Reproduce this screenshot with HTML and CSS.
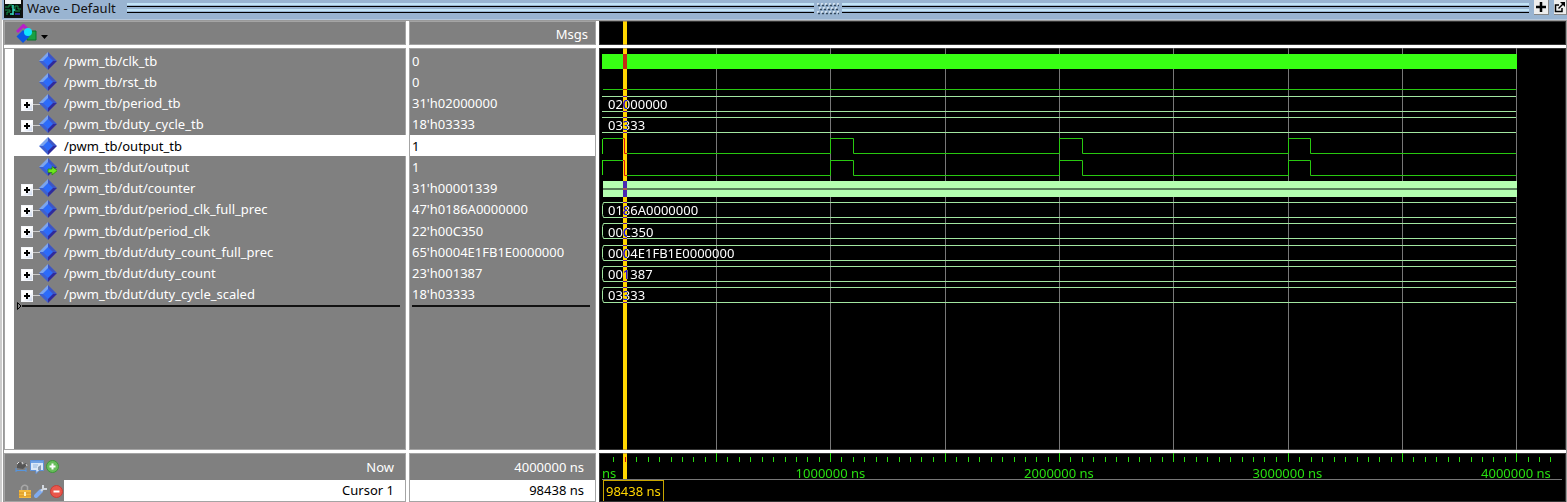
FILE: index.html
```html
<!DOCTYPE html>
<html lang="en">
<head>
<meta charset="utf-8">
<title>Wave - Default</title>
<link rel="stylesheet" href="styles.css">
</head>
<body>
<svg class="defs" aria-hidden="true">
  <symbol id="signal" viewBox="0 0 18 18">
    <path d="M9 0L0 9H5L9 5Z" fill="#7ba4ee"/>
    <path d="M9 0L18 9H13L9 5Z" fill="#3d55c4"/>
    <path d="M0 9L9 18V13L5 9Z" fill="#3e60cf"/>
    <path d="M18 9L9 18V13L13 9Z" fill="#2f2a9c"/>
    <path d="M9 4L14 9L9 14L4 9Z" fill="#2c6bfa"/>
  </symbol>
  <symbol id="signal-out" viewBox="0 0 18 18">
    <use href="#signal" width="18" height="18"/>
    <path d="M9 11H13V8.500L18.500 12.500L13 17V14.500H9Z" fill="#6de61c" stroke="#2b8a10" stroke-width=".8"/>
  </symbol>
</svg>
<main class="window">
  <header class="titlebar">
    <svg class="app-icon" width="19" height="18" viewBox="0 0 19 18">
      <path d="M0 0H19V18H0Z" fill="#111"/><path d="M1 0H17V4H1Z" fill="#f4f4f4"/><path d="M1 4H17V16H1Z" fill="#06120b"/>
      <path d="M1 7H5V5H8V8M1 10H6V12H3V15M11 6V11H16M11 6H14V9H17" fill="none" stroke="#17914b"/><path d="M9 5V15M6 14H9M9 10H11" fill="none" stroke="#39d9c0" stroke-width="1.500"/><path d="M11 14H16" stroke="#2b2a92" stroke-width="2"/>
    </svg>
    <h1 class="title">Wave - Default</h1>
    <span class="grip"></span>
    <svg class="dots" width="24" height="12" viewBox="0 0 24 12">
      <g fill="none" stroke-width="1.500" stroke-dasharray="2 2"><path d="M1 1H23M3 5H23M1 9H23" stroke="#e4eef8"/><path d="M2 2.500H23M4 6.500H23M2 10.500H23" stroke="#33475c"/></g>
    </svg>
    <span class="grip"></span>
    <button class="tool" aria-label="Add pane"><svg width="12" height="12" viewBox="0 0 12 12"><path d="M6 1V11M1 6H11" stroke="#000" stroke-width="2.500"/></svg></button>
    <button class="tool tool-last" aria-label="Undock"><svg width="12" height="12" viewBox="0 0 12 12"><path d="M5 4H1.500V10.500H8V7" fill="none" stroke="#000" stroke-width="1.500"/><path d="M4.500 7.500L9 3" stroke="#000" stroke-width="1.500"/><path d="M6 1H11V6Z"/></svg></button>
  </header>

  <div class="panes">
    <div class="cell head">
      <button class="picker" aria-label="Signal options">
        <svg width="34" height="20" viewBox="0 0 34 20"><path d="M1 8L7.500 1.500L12 6" fill="none" stroke="#b81ec8" stroke-width="3"/><path d="M11 7H20V16H11Z" fill="#18a043" stroke="#08742b"/><path d="M7 6L13.500 12.500L7 19L.500 12.500Z" fill="#0a55e4"/><circle cx="12" cy="8" r="4" fill="#12e4ff"/><path d="M25 11H32L28.500 15Z" fill="#000"/></svg>
      </button>
    </div>
    <div class="cell head msgs">Msgs</div>
    <div class="cell black"><i class="cursor" style="left:2.5%"></i></div>

    <div class="cell names">
      <ul class="rows">
        <li class="row"><svg class="sig"><use href="#signal"/></svg>/pwm_tb/clk_tb</li>
        <li class="row"><svg class="sig"><use href="#signal"/></svg>/pwm_tb/rst_tb</li>
        <li class="row"><button class="expand" aria-label="Expand period_tb"></button><svg class="sig"><use href="#signal"/></svg>/pwm_tb/period_tb</li>
        <li class="row"><button class="expand" aria-label="Expand duty_cycle_tb"></button><svg class="sig"><use href="#signal"/></svg>/pwm_tb/duty_cycle_tb</li>
        <li class="row selected"><svg class="sig"><use href="#signal"/></svg>/pwm_tb/output_tb</li>
        <li class="row"><svg class="sig"><use href="#signal-out"/></svg>/pwm_tb/dut/output</li>
        <li class="row"><button class="expand" aria-label="Expand counter"></button><svg class="sig"><use href="#signal"/></svg>/pwm_tb/dut/counter</li>
        <li class="row"><button class="expand" aria-label="Expand period_clk_full_prec"></button><svg class="sig"><use href="#signal"/></svg>/pwm_tb/dut/period_clk_full_prec</li>
        <li class="row"><button class="expand" aria-label="Expand period_clk"></button><svg class="sig"><use href="#signal"/></svg>/pwm_tb/dut/period_clk</li>
        <li class="row"><button class="expand" aria-label="Expand duty_count_full_prec"></button><svg class="sig"><use href="#signal"/></svg>/pwm_tb/dut/duty_count_full_prec</li>
        <li class="row"><button class="expand" aria-label="Expand duty_count"></button><svg class="sig"><use href="#signal"/></svg>/pwm_tb/dut/duty_count</li>
        <li class="row"><button class="expand" aria-label="Expand duty_cycle_scaled"></button><svg class="sig"><use href="#signal"/></svg>/pwm_tb/dut/duty_cycle_scaled</li>
      </ul>
      <div class="insert"><svg width="5" height="8" viewBox="0 0 5 8"><path d="M.500 .500L4 4L.500 7.500Z" fill="none" stroke="#000"/></svg><span class="insert-line"></span></div>
    </div>
    <div class="cell values">
      <ul class="rows">
        <li class="row">0</li><li class="row">0</li><li class="row">31'h02000000</li><li class="row">18'h03333</li>
        <li class="row selected">1</li><li class="row">1</li><li class="row">31'h00001339</li><li class="row">47'h0186A0000000</li>
        <li class="row">22'h00C350</li><li class="row">65'h0004E1FB1E0000000</li><li class="row">23'h001387</li><li class="row">18'h03333</li>
      </ul>
      <div class="insert"><span class="insert-line"></span></div>
    </div>
    <div class="cell black">
      <svg class="grid" viewBox="0 0 967 100" preserveAspectRatio="none"><path d="M117.500 0V100M231.500 0V100M346.500 0V100M460.500 0V100M574.500 0V100M689.500 0V100M803.500 0V100M917.500 0V100"/></svg>
      <svg class="waves" viewBox="0 0 967 260" preserveAspectRatio="none">
        <path class="clk" d="M3 6H918V21H3Z"/>
        <path class="bit" d="M4 41.500H917"/>
        <path class="bit" d="M4 90.500H25.500V105.500H231.500V90.500H254.500V105.500H460.500V90.500H483.500V105.500H689.500V90.500H711.500V105.500H917M4 112.500H25.500V127.500H231.500V112.500H254.500V127.500H460.500V112.500H483.500V127.500H689.500V112.500H711.500V127.500H917"/>
        <path class="edge" d="M3.500 91V106M3.500 112V127"/>
        <path class="bus" d="M3 48.500H917M3 63.500H917M3 69.500H917M3 84.500H917"/>
        <path class="counter" d="M4 133H918V140H4ZM4 142H918V149H4Z"/>
        <path class="counter-mid" d="M4 141H918"/>
        <path class="bus" d="M917 154.500H4.500L3.500 157.500V166.500L4.500 169.500H917M917 175.500H4.500L3.500 178.500V187.500L4.500 190.500H917M917 197.500H4.500L3.500 200.500V209.500L4.500 212.500H917M917 218.500H4.500L3.500 221.500V230.500L4.500 233.500H917M917 239.500H4.500L3.500 242.500V251.500L4.500 254.500H917"/>
      </svg>
      <ul class="rows bus-values">
        <li class="row"></li><li class="row"></li><li class="row">02000000</li><li class="row">03333</li>
        <li class="row"></li><li class="row"></li><li class="row"></li><li class="row">0186A0000000</li>
        <li class="row">00C350</li><li class="row">0004E1FB1E0000000</li><li class="row">001387</li><li class="row">03333</li>
      </ul>
      <i class="cursor" style="left:2.5%"></i>
    </div>

    <div class="cell foot">
      <div class="now">
        <span class="icons">
          <svg width="13" height="13" viewBox="0 0 13 13"><path d="M2 6L3 3L6 2L7 5L11 3L12 5L8 9L2 8Z" fill="#555"/><path d="M2 4L4 2M7 2L8 4M11 4L12 6" stroke="#ddd"/><path d="M1 10.500H11M1 8V12M11 8V12" stroke="#5795dd"/></svg>
          <svg width="14" height="14" viewBox="0 0 14 14"><path d="M.500 .500H13.500V10.500H9L6 13.500V10.500H.500Z" fill="#dbe8f8" stroke="#5d91d9"/><path d="M1 1H13V3H1Z" fill="#6ea1e5"/><path d="M3 5H8M3 7H7" stroke="#96b7dd"/><path d="M8 7L11 5V10H8Z" fill="#8a9bb0"/></svg>
          <svg width="13" height="13" viewBox="0 0 13 13"><circle cx="6.500" cy="6.500" r="6" fill="#68bd5b" stroke="#3c9838"/><path d="M6.500 3.500V9.500M3.500 6.500H9.500" stroke="#fff" stroke-width="2"/></svg>
        </span>
        <span class="label">Now</span>
      </div>
      <div class="cur">
        <span class="icons cur-icons">
          <svg width="14" height="14" viewBox="0 0 14 14"><path d="M3.500 6V3.500Q6 -.500 9.500 2.500V6" fill="none" stroke="#a7a7a7" stroke-width="1.500"/><path d="M1 6H13V14H1Z" fill="#f3b83d"/><path d="M1 9H13M1 12H13" stroke="#d58f20"/><path d="M6 8H8V12H6Z" fill="#fff1bd"/></svg>
          <svg width="14" height="14" viewBox="0 0 14 14"><path d="M2 12L7 7" stroke="#7fabf0" stroke-width="4" stroke-linecap="round"/><path d="M7 7L10 4M9 1V4L10 5H13" fill="none" stroke="#d3d8df" stroke-width="2"/></svg>
          <svg width="13" height="13" viewBox="0 0 13 13"><circle cx="6.500" cy="6.500" r="6" fill="#e9564b" stroke="#ca3c35"/><path d="M3.500 6.500H9.500" stroke="#fff" stroke-width="2"/></svg>
        </span>
        <span class="label">Cursor 1</span>
      </div>
    </div>
    <div class="cell foot">
      <div class="now"><span class="label">4000000 ns</span></div>
      <div class="cur"><span class="label">98438 ns</span></div>
    </div>
    <div class="cell black foot">
      <div class="ruler">
        <svg class="ticks" viewBox="0 0 967 10" preserveAspectRatio="none">
          <defs><path id="minor" d="M11.500 4V9M23.500 4V9M34.500 4V9M46.500 4V9M57.500 4V9M69.500 4V9M80.500 4V9M91.500 4V9M103.500 4V9"/></defs>
          <use href="#minor" x="3"/><use href="#minor" x="117"/><use href="#minor" x="231"/><use href="#minor" x="346"/><use href="#minor" x="460"/><use href="#minor" x="574"/><use href="#minor" x="689"/><use href="#minor" x="803"/>
          <path d="M117.500 0V9M231.500 0V9M346.500 0V9M460.500 0V9M574.500 0V9M689.500 0V9M803.500 0V9M917.500 0V9M929.500 4V9M940.500 4V9M951.500 4V9"/>
        </svg>
        <div class="times">
          <span class="time time-start">ns</span>
          <span class="time" style="left:23.8%">1000000 ns</span>
          <span class="time" style="left:47.6%">2000000 ns</span>
          <span class="time" style="left:71.4%">3000000 ns</span>
          <span class="time" style="left:95.2%">4000000 ns</span>
        </div>
        <i class="cursor" style="left:2.5%"></i>
      </div>
      <div class="cursor-time"><span class="stamp">98438 ns</span></div>
    </div>
  </div>
</main>
</body>
</html>
```
FILE: styles.css
```css
* { box-sizing: border-box; }
body { margin: 0; font: 13px/20px "Noto Sans", sans-serif; background: #fff; overflow: hidden; }
.defs { position: absolute; width: 0; height: 0; }
button { padding: 0; border: 0; background: none; }
ul { list-style: none; margin: 0; padding: 0; }

.window { display: flex; flex-direction: column; min-height: 100vh; border-left: 2px solid #ccc; }

.titlebar { display: flex; align-items: flex-start; height: 20px; padding-left: 2px; background: #99b4d1; border-bottom: 1px solid #b6c8dc; }
.app-icon { flex: none; }
.title { margin: 0 11px 0 4px; font-size: 13px; font-weight: 400; line-height: 17px; color: #111; white-space: nowrap; }
.grip { flex: 690 1 0; height: 10px; margin-top: 3px; background: linear-gradient(#c2e4f6 2px, #99b4d1 2px 3px, #000 3px 4px, #99b4d1 4px 6px, #c2e4f6 6px 8px, #99b4d1 8px 9px, #000 9px); }
.dots { flex: none; margin: 3px 2px 0; }
.tool { flex: none; display: flex; align-items: center; justify-content: center; width: 15px; height: 15px; margin-left: 5px; background: #eee; border-right: 1px solid #888; border-bottom: 1px solid #888; }
.tool-last { width: 13px; }

.panes { flex: 1; display: grid; grid-template-columns: 402px 187px 1fr; grid-template-rows: 24px 1fr 49px; gap: 3px; margin-left: 1px; background: #fff; border-top: 1px solid #999; border-left: 1px solid #999; border-right: 1px solid #999; }
.cell { position: relative; min-width: 0; color: #fff; background: #808080; outline: 1px solid #a4a4a4; outline-offset: -1px; }
.black { background: #000; isolation: isolate; overflow: hidden; outline-color: #333; }
.picker { display: block; margin: 3px 0 0 12px; height: 20px; }
.msgs { padding: 3px 8px 0 0; text-align: right; }

.names { border-left: 10px solid #fff; }
.rows { display: grid; grid-template-rows: repeat(12, 1fr); height: 255px; margin-top: 2px; }
.row { display: flex; align-items: center; white-space: nowrap; }
.names .row { position: relative; padding-left: 25px; }
.selected { background: #fff; color: #000; }
.sig { width: 18px; height: 18px; margin-right: 7px; flex: none; }
.expand { position: absolute; left: 7px; top: 6px; width: 12px; height: 12px; background: linear-gradient(#000, #000) center/6px 2px no-repeat, linear-gradient(#000, #000) center/2px 6px no-repeat, linear-gradient(135deg, #fff 50%, #c8d4ea); border: 1px solid #f4f6fa; }
.expand::after { content: ""; position: absolute; left: 11px; top: 4px; width: 7px; height: 1px; background: #ccc; }
.values .row { padding-left: 3px; }
.insert { display: flex; align-items: center; height: 2px; padding: 0 6px 0 3px; }
.insert svg { flex: none; }
.insert-line { flex: 1; height: 2px; background: #111; }

.grid, .waves { position: absolute; left: 0; top: 0; width: 100%; height: 100%; fill: none; stroke: #777; }
.waves { height: 260px; stroke-width: 1; }
.clk { fill: #38ff14; stroke: none; }
.bit { stroke: #28c810; }
.edge { stroke: #2fe010; }
.bus { stroke: #a2e6a0; }
.counter { fill: #b4ffb0; stroke: none; }
.counter-mid { stroke: #57805a; stroke-width: 2; }
.bus-values { position: relative; padding: 1px 0 0 9px; height: 256px; }
.cursor { position: absolute; top: 0; bottom: 0; width: 4px; background: #ffd600; mix-blend-mode: difference; }

.foot { display: flex; flex-direction: column; }
.now { display: flex; align-items: center; height: 27px; padding: 0 12px 0 11px; }
.cur { display: flex; flex: 1; color: #000; background: #fff; padding-right: 12px; }
.label { margin-left: auto; }
.icons { display: flex; align-items: center; gap: 2px; }
.cur-icons { width: 60px; padding-left: 14px; background: #808080; }

.ruler { position: relative; height: 28px; border-bottom: 1px solid #777; margin: 0 4px 0 3px; color: #28e010; }
.ticks { position: absolute; left: -3px; top: 0; width: calc(100% + 7px); height: 10px; stroke: #28d810; }
.times { position: absolute; left: 0; right: 0; top: 10px; height: 18px; }
.time { position: absolute; top: 0; transform: translateX(-50%); white-space: nowrap; }
.time-start { left: 0; transform: none; }
.ruler .cursor { margin-left: -3px; }
.cursor-time { flex: 1; display: flex; padding-left: 4px; }
.stamp { padding: 0 2px; border: 1px solid #c8a600; color: #ffd600; }
```
